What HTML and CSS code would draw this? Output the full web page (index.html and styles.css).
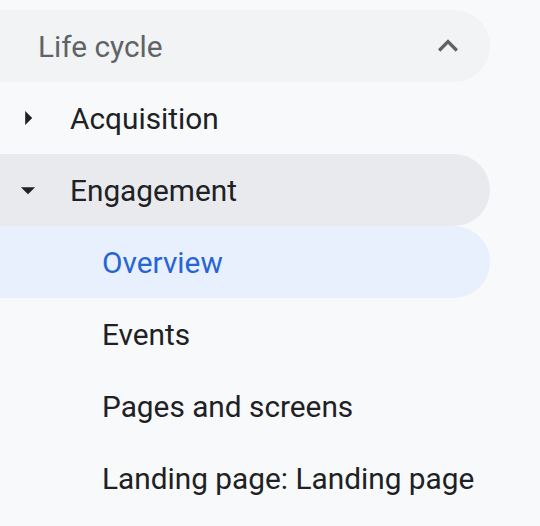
FILE: index.html
```html
<!DOCTYPE html>
<html lang="en">
<head>
    <meta charset="UTF-8">
    <title>Life cycle</title>
    <link rel="stylesheet" href="styles.css">
</head>
<body>
    <nav class="sidenav">
        <div class="section-header">
            <span>Life cycle</span>
            <svg class="chevron" viewBox="0 0 24 24">
                <path d="M7.41 15.41L12 10.83l4.59 4.58L18 14l-6-6-6 6z" fill="#5f6368"/>
            </svg>
        </div>

        <div class="nav-item">
            <svg class="caret" viewBox="0 0 24 24">
                <path d="M10 7l5 5-5 5z" fill="#202124"/>
            </svg>
            <span>Acquisition</span>
        </div>

        <div class="nav-item open">
            <svg class="caret" viewBox="0 0 24 24">
                <path d="M7 10l5 5 5-5z" fill="#202124"/>
            </svg>
            <span>Engagement</span>
        </div>

        <div class="sub-item active">Overview</div>
        <div class="sub-item">Events</div>
        <div class="sub-item">Pages and screens</div>
        <div class="sub-item">Landing page: Landing page</div>
    </nav>
</body>
</html>
```

FILE: styles.css
```css
body {
    margin: 0;
    padding-top: 10px;
    background-color: #f8f9fa;
    font-family: Roboto, "Noto Sans", sans-serif;
    font-size: 29.8px;
    color: #202124;
}

.sidenav {
    width: 490px;
}

.section-header, .nav-item, .sub-item {
    height: 72px;
    display: flex;
    align-items: center;
    border-radius: 0 36px 36px 0;
}

.section-header {
    background-color: #f1f3f4;
    color: #5f6368;
    padding-left: 38px;
    padding-right: 22px;
    justify-content: space-between;
}

.chevron {
    width: 40px;
    height: 40px;
}

.nav-item {
    padding-left: 11px;
}

.caret {
    width: 34px;
    height: 34px;
    margin-right: 25px;
}

.nav-item.open {
    background-color: #e8eaed;
}

.sub-item {
    padding-left: 102px;
}

.sub-item.active {
    background-color: #e8f0fe;
    color: #2765d6;
}
```
